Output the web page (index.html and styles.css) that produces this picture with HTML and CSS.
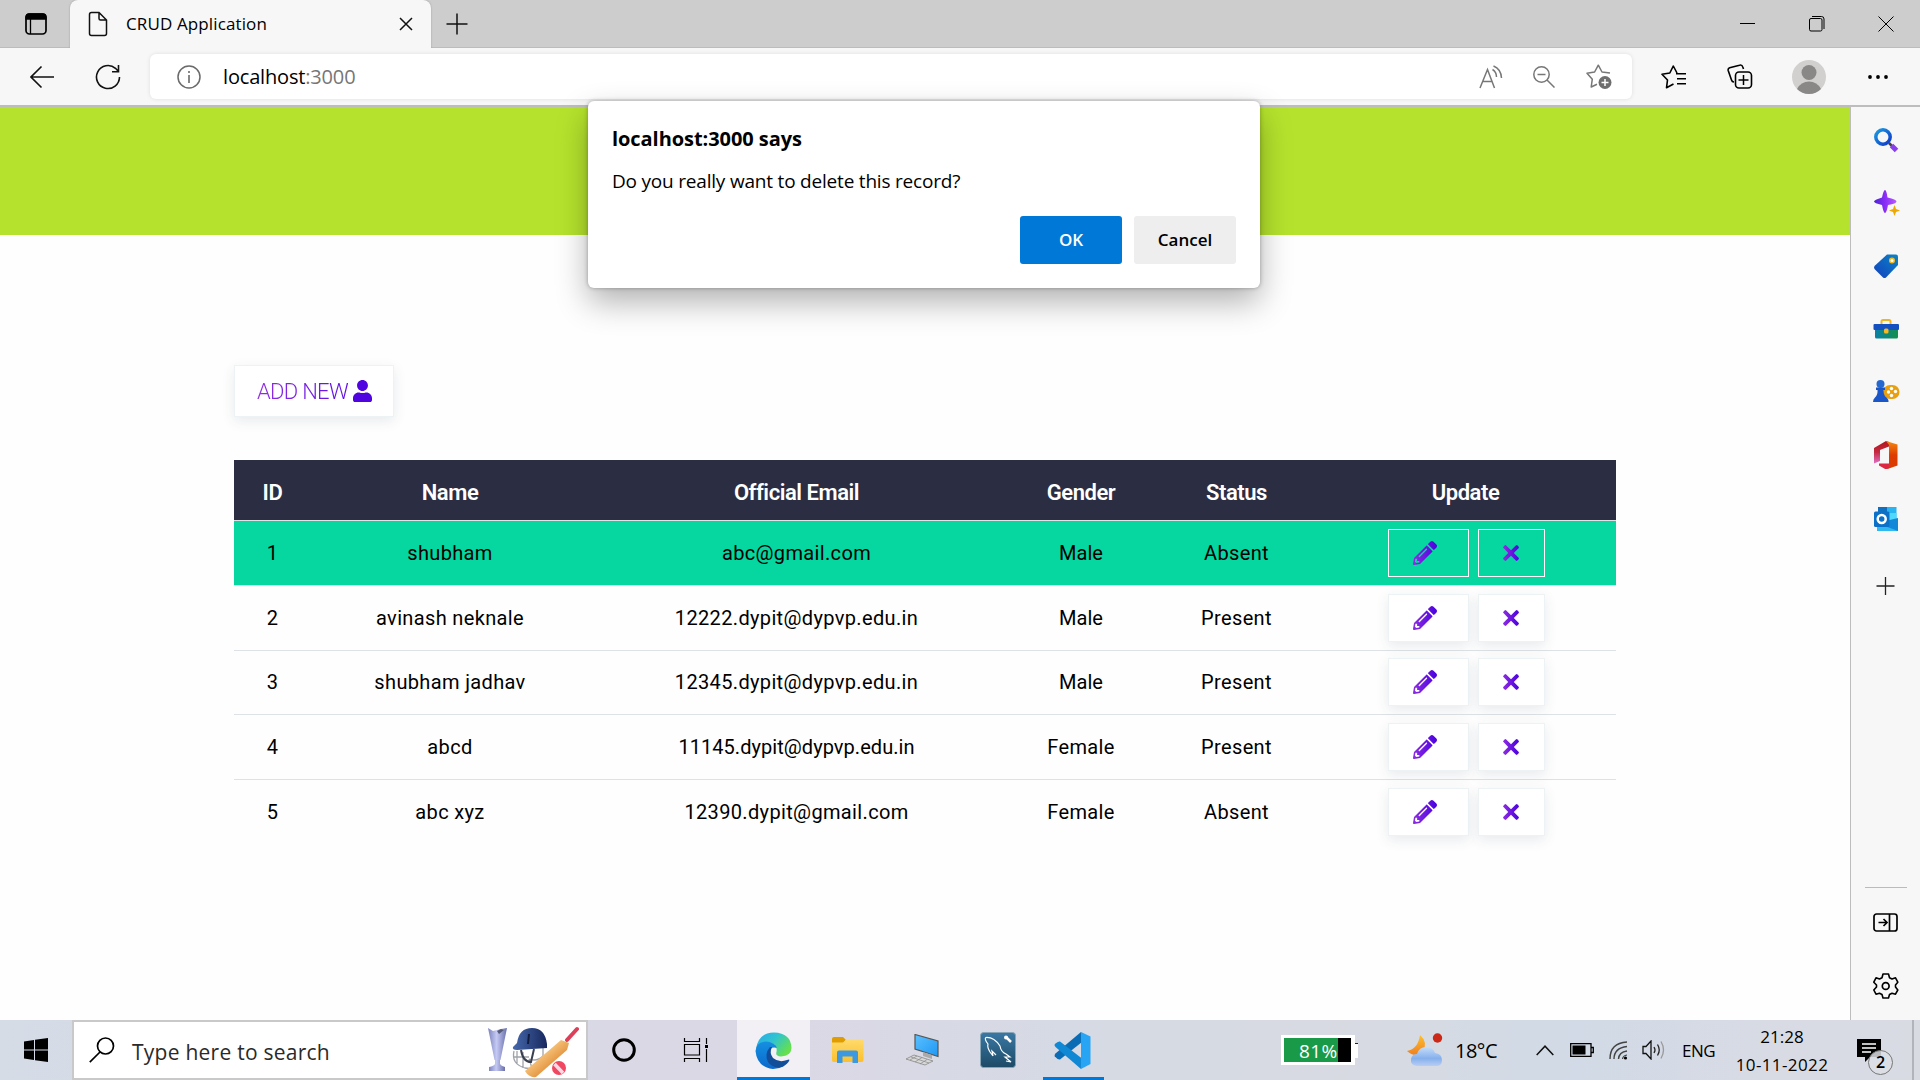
FILE: index.html
```html
<!DOCTYPE html>
<html lang="en">
<head>
<meta charset="utf-8">
<title>CRUD Application</title>
<link rel="stylesheet" href="styles.css">
</head>
<body>
<svg class="defs" width="0" height="0">
  <defs>
    <linearGradient id="violet" x1="0" y1="0" x2="1" y2="0"><stop offset="0" stop-color="#8e2de2"/><stop offset="1" stop-color="#4a00e0"/></linearGradient>
    <linearGradient id="blue" x1="0" y1="0" x2="1" y2="1"><stop offset="0" stop-color="#1a9be0"/><stop offset="1" stop-color="#1238c8"/></linearGradient>
    <linearGradient id="star" x1="0" y1="0" x2="1" y2="0"><stop offset="0" stop-color="#4b24d8"/><stop offset=".5" stop-color="#8a2cf5"/><stop offset="1" stop-color="#b95cff"/></linearGradient>
    <linearGradient id="tag" x1="0" y1="1" x2="1" y2="0"><stop offset="0" stop-color="#1340c0"/><stop offset="1" stop-color="#0b84c4"/></linearGradient>
    <linearGradient id="box" x1="0" y1="0" x2="1" y2="0"><stop offset="0" stop-color="#0a80a8"/><stop offset="1" stop-color="#12904a"/></linearGradient>
    <linearGradient id="office" x1="0" y1="0" x2="0" y2="1"><stop offset="0" stop-color="#f58a10"/><stop offset=".5" stop-color="#de3c00"/><stop offset="1" stop-color="#d83b01"/></linearGradient>
    <linearGradient id="officeLeft" x1="0" y1="0" x2="0" y2="1"><stop offset="0" stop-color="#b0151c"/><stop offset=".5" stop-color="#c42a40"/><stop offset="1" stop-color="#e070c8"/></linearGradient>
    <linearGradient id="edgeTop" x1="0" y1="0" x2="1" y2=".6"><stop offset="0" stop-color="#2aa6ea"/><stop offset=".5" stop-color="#2fc4d0"/><stop offset="1" stop-color="#66e04c"/></linearGradient>
    <linearGradient id="edgeMid" x1="0" y1="0" x2="0" y2="1"><stop offset="0" stop-color="#1590e0"/><stop offset="1" stop-color="#0a68cc"/></linearGradient>
    <linearGradient id="screen" x1="0" y1="0" x2="1" y2="1"><stop offset="0" stop-color="#5cc0ff"/><stop offset="1" stop-color="#1e98f4"/></linearGradient>
    <linearGradient id="sql" x1="0" y1="0" x2="0" y2="1"><stop offset="0" stop-color="#3a78a4"/><stop offset="1" stop-color="#1d4a66"/></linearGradient>
    <linearGradient id="folder" x1="0" y1="0" x2="0" y2="1"><stop offset="0" stop-color="#ffda6c"/><stop offset="1" stop-color="#fbc02c"/></linearGradient>
    <linearGradient id="cup" x1="0" y1="0" x2="1" y2="0"><stop offset="0" stop-color="#7c82bc"/><stop offset=".45" stop-color="#c4c9f4"/><stop offset="1" stop-color="#6a70aa"/></linearGradient>
    <linearGradient id="helmet" x1="0" y1="0" x2="1" y2="0"><stop offset="0" stop-color="#4668ac"/><stop offset="1" stop-color="#17285e"/></linearGradient>
    <linearGradient id="bat" x1="0" y1="0" x2="1" y2="1"><stop offset=".3" stop-color="#fcd08c"/><stop offset=".7" stop-color="#e08c34"/></linearGradient>
    <linearGradient id="moon" x1="0" y1="0" x2="0" y2="1"><stop offset="0" stop-color="#fcc030"/><stop offset="1" stop-color="#f08020"/></linearGradient>
    <linearGradient id="cloud" x1="0" y1="0" x2="0" y2="1"><stop offset="0" stop-color="#c4ddfa"/><stop offset=".6" stop-color="#86b0ec"/><stop offset="1" stop-color="#b8cdf4"/></linearGradient>
    <symbol id="pencil" viewBox="0 0 512 512"><path d="M497.9 142.1l-46.1 46.1c-4.7 4.7-12.3 4.7-17 0l-111-111c-4.7-4.7-4.7-12.3 0-17l46.1-46.1c18.7-18.7 49.1-18.7 67.9 0l60.1 60.1c18.8 18.7 18.8 49.1 0 67.9zM284.2 99.8L21.6 362.4.4 483.9c-2.9 16.4 11.4 30.6 27.8 27.8l121.5-21.3 262.6-262.6c4.7-4.7 4.7-12.3 0-17l-111-111c-4.8-4.7-12.4-4.7-17.1 0zM124.1 339.9c-5.5-5.5-5.5-14.3 0-19.8l154-154c5.5-5.5 14.3-5.5 19.8 0s5.5 14.3 0 19.8l-154 154c-5.5 5.5-14.3 5.5-19.8 0zM88 424h48v36.3l-64.5 11.3-31.1-31.1L51.7 376H88v48z" fill="url(#violet)"/></symbol>
    <symbol id="cross" viewBox="0 0 16 16"><path d="M0 2.5Q1 .3 2.7 0L8 5.2 13.3 0Q15.500.3 16 2.700L10.8 8 16 13.300Q15.600 15.500 13.300 16L8 10.800 2.700 16Q.4 15.600 0 13.300L5.200 8Z" fill="url(#violet)"/></symbol>
  </defs>
</svg>

<header class="tabs">
  <svg class="workspaces" width="22" height="22" viewBox="0 0 22 22"><rect x="1" y="1" width="20" height="20" rx="3.500" fill="none" stroke="#000" stroke-width="1.700"/><path d="M1 6V4q0-3 3-3h14q3 0 3 3v2zM5.500 6v15" stroke="#000" stroke-width="1.300"/></svg>
  <div class="tab">
    <svg width="20" height="26" viewBox="0 0 20 26"><path d="M3.500 1.500H11L18.500 9V22.500Q18.500 24.500 16.500 24.500H3.500Q1.500 24.500 1.500 22.500V3.500Q1.500 1.500 3.500 1.500ZM11 1.500V7.500Q11 9 12.500 9H18.500" fill="none" stroke="#111" stroke-width="1.500"/></svg>
    <span class="tab-title">CRUD Application</span>
    <svg class="tab-close" width="14" height="14" viewBox="0 0 14 14"><path d="M1 1L13 13M13 1L1 13" stroke="#111" stroke-width="1.500"/></svg>
  </div>
  <svg class="tab-new" width="22" height="22" viewBox="0 0 22 22"><path d="M11 .5V21.500M.5 11H21.500" stroke="#111" stroke-width="1.500"/></svg>
  <div class="window-buttons">
    <svg width="16" height="16" viewBox="0 0 16 16"><path d="M0 7.500H15" stroke="#000"/></svg>
    <svg width="16" height="16" viewBox="0 0 16 16"><rect x=".5" y="2.500" width="12.500" height="12.500" rx="1.500" fill="none" stroke="#000"/><path d="M3 .5H12.500Q15 .5 15 3V13" fill="none" stroke="#000"/></svg>
    <svg width="16" height="16" viewBox="0 0 16 16"><path d="M.5 .5L15.500 15.500M15.500 .5L.5 15.500" stroke="#000"/></svg>
  </div>
</header>

<nav class="toolbar">
  <svg class="back" width="24" height="24" viewBox="0 0 24 24"><path d="M24 12H1M11.500 1.500L1 12L11.500 22.500" fill="none" stroke="#111" stroke-width="1.600"/></svg>
  <svg class="reload" width="26" height="26" viewBox="0 0 26 26"><path d="M24.500 13A11.500 11.500 0 1 1 20.500 4.300L23.500 7.500M23.500 1V7.800H17" fill="none" stroke="#111" stroke-width="1.600"/></svg>
  <div class="address">
    <svg width="24" height="24" viewBox="0 0 24 24"><circle cx="12" cy="12" r="11" fill="none" stroke="#6a6a6a" stroke-width="1.500"/><path d="M12 10V18M12 6V8" stroke="#6a6a6a" stroke-width="1.600"/></svg>
    <span class="url">localhost<span class="port">:3000</span></span>
    <svg class="read" width="24" height="24" viewBox="0 0 24 24"><path d="M1 23L8.500 4.500L15.500 23M3.500 16.500H13M13.500 4.500Q17.500 7 17.500 12M14.500 1Q22 4 22.500 13" fill="none" stroke="#777" stroke-width="1.500"/></svg>
    <svg class="zoom-out" width="22" height="22" viewBox="0 0 22 22"><circle cx="8.500" cy="8.500" r="7.700" fill="none" stroke="#777" stroke-width="1.500"/><path d="M4.500 8.500H12.500M14 14L21.500 21.500" stroke="#777" stroke-width="1.500"/></svg>
    <svg class="fav" width="26" height="26" viewBox="0 0 26 26"><path d="M24 9L16 8L12.300 1.200L8.600 8L1 9.300L6.300 15.200L5.200 23L11 20.300" fill="none" stroke="#777" stroke-width="1.500" stroke-linejoin="round"/><circle cx="19" cy="18.500" r="6.500" fill="#6e6e6e"/><path d="M19 15V22M15.500 18.500H22.500" stroke="#fff" stroke-width="1.500"/></svg>
  </div>
  <svg class="favorites" width="26" height="24" viewBox="0 0 26 24"><path d="M16 8L12.300 1L8.800 8L1 9.300L6.500 15L5.500 22.800L12.500 19M15 8.700H25M16 13.700H25M16 18.700H25" fill="none" stroke="#000" stroke-width="1.600" stroke-linejoin="round"/></svg>
  <svg class="collections" width="26" height="26" viewBox="0 0 26 26"><path d="M7 18Q5 18 4.500 16L1.200 6.500Q.7 4.500 2.700 3.700L12.500 1.200Q15 .5 15.800 3L16.500 5" fill="none" stroke="#000" stroke-width="1.600"/><rect x="8.500" y="8" width="16" height="16" rx="3.500" fill="none" stroke="#000" stroke-width="1.600"/><path d="M16.500 11V21M11.500 16H21.500" stroke="#000" stroke-width="1.500"/></svg>
  <svg class="avatar" width="34" height="34" viewBox="0 0 34 34"><circle cx="17" cy="17" r="17" fill="#d2d0ce"/><circle cx="17" cy="12.500" r="7.500" fill="#8a8886"/><path d="M5 29Q9 21.500 17 21.500T29 29Q24 34 17 34T5 29Z" fill="#8a8886"/></svg>
  <svg class="more" width="20" height="4" viewBox="0 0 20 4"><circle cx="2" cy="2" r="1.900"/><circle cx="10" cy="2" r="1.900"/><circle cx="18" cy="2" r="1.900"/></svg>
</nav>

<div class="content">
  <main class="page">
    <div class="banner"></div>
    <div class="container">
      <button class="btn btn-new"><span class="btn-label">ADD NEW</span><svg width="19" height="22" viewBox="0 0 448 512" preserveAspectRatio="none"><path fill="#4f04e0" d="M224 256c70.700 0 128-57.300 128-128S294.700 0 224 0 96 57.300 96 128s57.300 128 128 128zm89.600 32h-16.700c-22.200 10.200-46.900 16-72.900 16s-50.600-5.800-72.900-16h-16.700C60.200 288 0 348.200 0 422.400V464c0 26.500 21.500 48 48 48h352c26.500 0 48-21.500 48-48v-41.600c0-74.200-60.200-134.400-134.400-134.400z"/></svg></button>
      <table class="records">
        <colgroup><col class="c-id"><col class="c-name"><col class="c-email"><col class="c-gender"><col class="c-status"><col class="c-update"></colgroup>
        <thead><tr><th>ID</th><th>Name</th><th>Official Email</th><th>Gender</th><th>Status</th><th>Update</th></tr></thead>
        <tbody>
          <tr class="active"><td>1</td><td>shubham</td><td>abc@gmail.com</td><td class="gender">Male</td><td>Absent</td><td><div class="actions"><button class="btn edit"><svg width="24" height="24"><use href="#pencil"/></svg></button><button class="btn del"><svg width="16" height="16"><use href="#cross"/></svg></button></div></td></tr>
          <tr><td>2</td><td>avinash neknale</td><td>12222.dypit@dypvp.edu.in</td><td class="gender">Male</td><td>Present</td><td><div class="actions"><button class="btn edit"><svg width="24" height="24"><use href="#pencil"/></svg></button><button class="btn del"><svg width="16" height="16"><use href="#cross"/></svg></button></div></td></tr>
          <tr><td>3</td><td>shubham jadhav</td><td>12345.dypit@dypvp.edu.in</td><td class="gender">Male</td><td>Present</td><td><div class="actions"><button class="btn edit"><svg width="24" height="24"><use href="#pencil"/></svg></button><button class="btn del"><svg width="16" height="16"><use href="#cross"/></svg></button></div></td></tr>
          <tr><td>4</td><td>abcd</td><td class="narrow">11145.dypit@dypvp.edu.in</td><td>Female</td><td>Present</td><td><div class="actions"><button class="btn edit"><svg width="24" height="24"><use href="#pencil"/></svg></button><button class="btn del"><svg width="16" height="16"><use href="#cross"/></svg></button></div></td></tr>
          <tr><td>5</td><td>abc xyz</td><td>12390.dypit@gmail.com</td><td>Female</td><td>Absent</td><td><div class="actions"><button class="btn edit"><svg width="24" height="24"><use href="#pencil"/></svg></button><button class="btn del"><svg width="16" height="16"><use href="#cross"/></svg></button></div></td></tr>
        </tbody>
      </table>
    </div>
  </main>
  <aside class="sidebar">
    <svg viewBox="0 0 28 28"><circle cx="11" cy="11" r="7.200" fill="none" stroke="url(#blue)" stroke-width="3.500"/><path d="M17 17L20 20" stroke="#444" stroke-width="2.500"/><path d="M19.500 19.500L24.500 24.500" stroke="#8a3cf0" stroke-width="5"/></svg>
    <svg viewBox="0 0 28 28"><path d="M13 1Q14.500 1 15.500 8.500Q24.500 10.500 24.500 12.500T16 16Q14.500 24 13 24T10 16Q2 14 2 12.500T10 8.500Q11.500 1 13 1Z" fill="url(#star)"/><path d="M22.500 16L24 20L28 21.500L24 23L22.500 27L21 23L17 21.500L21 20Z" fill="#f0a800"/></svg>
    <svg viewBox="0 0 28 28"><path d="M15 2.500H24Q26 2.500 26 4.500V13L14 25.500Q12.500 26.500 11 25.500L2.500 17Q1.500 15.500 2.500 14Z" fill="url(#tag)"/><circle cx="20" cy="8.500" r="2.300" fill="#fff" stroke="#f0b820" stroke-width="1.500"/></svg>
    <svg viewBox="0 0 28 28"><path d="M9.500 9V6.500Q9.500 5 11 5H17Q18.500 5 18.500 6.500V9" fill="none" stroke="#f0b428" stroke-width="2"/><rect x="3" y="12" width="23" height="11.500" rx="1.500" fill="url(#box)"/><rect x="1.500" y="9" width="25.500" height="6" rx="1" fill="#1550c0"/><rect x="12" y="13.500" width="4.500" height="5" rx="1.500" fill="#f8b820"/></svg>
    <svg viewBox="0 0 28 28"><rect x="11" y="7" width="16.500" height="14" rx="7" fill="#e8a010"/><g fill="#fff"><circle cx="19.500" cy="10.500" r="1.700"/><circle cx="23.500" cy="13.500" r="1.700"/><circle cx="19.500" cy="17.500" r="1.700"/><circle cx="16.500" cy="14" r="1.700"/></g><circle cx="8.500" cy="6" r="4" fill="#2468d0"/><path d="M4 9.500H13V12H11.500Q11.500 18 15 20Q17 22 16.500 24H1Q1 21 3 19.500Q6 17 5.500 12H4Z" fill="#1a56c8"/></svg>
    <svg viewBox="0 0 28 28"><path d="M2 7L14 0L17 1V5.500L8 9V20L2 22.500Z" fill="url(#officeLeft)"/><path d="M14 0L25.500 3.500V24.500L14 28.500L17 26V4Z" fill="url(#office)"/><path d="M7 22.500H17V27L14 28.500L7 24.500Z" fill="#dc2840"/></svg>
    <svg viewBox="0 0 28 28"><rect x="6" y="2" width="18.500" height="14" fill="#28b4f0"/><path d="M6 2H15V8H6Z" fill="#1070c0"/><path d="M15 8H24.500V16H15Z" fill="#50d9ff"/><path d="M5 18L26 13V26H5Z" fill="#1488d8"/><path d="M5 18L26 26H5Z" fill="#30b8f0"/><rect x="2" y="6.500" width="15.500" height="15.500" rx="1.500" fill="#0a70c8"/><circle cx="9.700" cy="14" r="4" fill="none" stroke="#fff" stroke-width="2.500"/></svg>
    <svg class="add" viewBox="0 0 28 28"><path d="M13.500 5V23M4.500 14H22.500" stroke="#222" stroke-width="1.300"/></svg>
    <div class="rule"></div>
    <svg viewBox="0 0 28 28"><rect x="2" y="5" width="23" height="17" rx="2.500" fill="none" stroke="#000" stroke-width="1.700"/><path d="M17.500 5V22M6.500 13.500H15M11.500 10L15 13.500L11.500 17" fill="none" stroke="#000" stroke-width="1.700"/></svg>
    <svg viewBox="0 0 28 28"><path d="M11 2H16.500L17.500 5.800L20 7L23.500 5.800L25.800 10.200L23.500 13V15L25.800 18L23.500 22.200L20 21.200L17.500 22.500L16.500 26H11L10 22.500L7.500 21.200L4 22.200L1.800 18L4.500 15V13L1.800 10.200L4 5.800L7.500 7L10 5.800Z" fill="none" stroke="#000" stroke-width="1.600" stroke-linejoin="round"/><circle cx="13.700" cy="14" r="3.400" fill="none" stroke="#000" stroke-width="1.700"/></svg>
  </aside>
</div>

<footer class="taskbar">
  <div class="cell start"><svg width="24" height="24" viewBox="0 0 24 24"><path d="M0 3.500L10 2V11.400H0ZM11 1.800L24 0V11.400H11ZM0 12.500H10V22L0 20.600ZM11 12.500H24V24L11 22.200Z"/></svg></div>
  <div class="search">
    <svg width="26" height="26" viewBox="0 0 26 26"><circle cx="16.500" cy="9" r="8" fill="none" stroke="#000" stroke-width="1.700"/><path d="M11 15L.8 25.200" stroke="#000" stroke-width="1.700"/></svg>
    <span class="search-text">Type here to search</span>
    <svg class="cricket" width="92" height="52" viewBox="0 0 92 52"><path d="M1 2L6 5L14 3L20 2L13.500 34H7.500Z" fill="url(#cup)"/><path d="M8 34H13V38Q14 40 18 41V45H2V41Q7 40 8 38Z" fill="url(#cup)"/><path d="M10 5L14 3L17 4L12 8Z" fill="#555a78"/><path d="M27 25Q24 38 38 42Q50 44 55 35M27 31H42M30 25V38M36 26V42M42 33Q50 36 56 30V22M42 33L45 42" fill="none" stroke="#a0a4a8" stroke-width="1.300"/><path d="M34 24Q36 36 44 36L47 23" fill="none" stroke="#3a3f50" stroke-width="2"/><path d="M30 17Q32 2 45 2T60 18V22L30 24Q25 24 26 21Z" fill="url(#helmet)"/><path d="M42 8L41 18" stroke="#101c40" stroke-width="2"/><path d="M80 14L90 3" stroke="#dc4058" stroke-width="4" stroke-linecap="round"/><path d="M74 14L82 17L80 24L49 51Q42 52 38 45Z" fill="url(#bat)"/><circle cx="72" cy="42" r="7" fill="#f04860"/><path d="M67.500 38L76 47" stroke="#ffd8e4" stroke-width="3.500"/></svg>
  </div>
  <div class="cell"><svg width="24" height="24" viewBox="0 0 24 24"><circle cx="12" cy="12" r="10.300" fill="none" stroke="#000" stroke-width="3"/></svg></div>
  <div class="cell"><svg width="26" height="24" viewBox="0 0 26 24"><path d="M1.500 0V3.500H16.500V0M1.500 24V20.500H16.500V24M1.500 6.500H16.500V17H1.500ZM23.500 0V6M23.500 11V24" fill="none" stroke="#000" stroke-width="1.200"/><rect x="22" y="7" width="3" height="3"/></svg></div>
  <div class="cell edge"><svg width="37" height="37" viewBox="0 0 37 37"><path d="M1 17Q3 1 19 .5Q36 1 36.500 16Q36 24 26 24.500Q20 24 21.500 20Q23 12 14 10Q5 9.500 1 17Z" fill="url(#edgeTop)"/><path d="M.5 19Q1 10 11 9.500Q20 10 22 16Q15 14 13.500 21Q13 31 25 34Q28 34 29 34Q24 37 18 37Q2 35 .5 19Z" fill="url(#edgeMid)"/><path d="M15 15Q9 22 13 30Q18 37 27 35Q33 32 34.500 28Q34 27 32 28Q24 31 18 26Q14 21 17 15Z" fill="#114d98"/></svg></div>
  <div class="cell app"><svg width="33" height="28" viewBox="0 0 33 28"><path d="M1 3Q1 1 3 1H12L15 4L12 8H1Z" fill="#e09c00"/><path d="M1 6.500H12L15 3.500H31Q32.500 3.500 32.500 5V24Q32.500 26 31 26H2.500Q1 26 1 24Z" fill="url(#folder)"/><path d="M6 27V16.500Q6 14.500 8 14.500H25Q27 14.500 27 16.500V27H21.500V20.500H11.500V27Z" fill="#3c98e0"/></svg></div>
  <div class="cell app"><svg width="33" height="32" viewBox="0 0 33 32"><path d="M9 .5L32 7V22.500L9 15Z" fill="url(#screen)" stroke="#555" stroke-width="1.200"/><path d="M17 18V22L26 25V21Z" fill="#aaa"/><path d="M8 21L27 27L19 31L0 25Z" fill="#d8d8d8" stroke="#888" stroke-width=".8"/><path d="M5 23L23 29M11 22L4 26M16 23.500L9 28M21 25.500L14 30" stroke="#888" stroke-width=".7"/></svg></div>
  <div class="cell app"><svg width="36" height="36" viewBox="0 0 36 36"><rect x=".5" y=".5" width="35" height="35" rx="3" fill="url(#sql)" stroke="#89a5b8" stroke-width="1"/><path d="M13 24L10 20Q7 15 8 12Q4 7 6 5.500Q14 5 20 14Q21 20 26 22L30 25L25 25L31 30L26 29M13 24L12 19L16 23" fill="none" stroke="#fff" stroke-width="1.200"/><path d="M26 5L31 10" stroke="#fff" stroke-width="2.500"/><circle cx="26" cy="5.500" r="2" fill="#fff"/></svg></div>
  <div class="cell app code"><svg width="37" height="37" viewBox="0 0 37 37"><path d="M27 0L28 10L6 27.500Q4 28 .8 24.500Q0 23 1.500 21.500Z" fill="#0a6cb4"/><path d="M27 37L28 26.500L6 9.500Q4 9 .8 12Q0 13.500 1.500 15Z" fill="#1088d4"/><path d="M27 0L36.500 4.500V32L27 37Z" fill="#28a4f4"/></svg></div>

  <div class="battery-widget"><span class="charge">81%</span></div>
  <svg class="weather" width="37" height="34" viewBox="0 0 37 34"><path d="M14 2Q22 9 17 18Q10 26 1 18Q12 16 14 2Z" fill="url(#moon)"/><path d="M11 33Q4 32 5 26Q6 21 11 21Q13 14 20 14Q27 14 29 20Q36 21 36 27Q36 33 30 33Z" fill="url(#cloud)"/><circle cx="31.500" cy="5" r="4.700" fill="#cc2818"/></svg>
  <span class="temp">18°C</span>
  <svg class="chevron" width="18" height="11" viewBox="0 0 18 11"><path d="M.7 10L9 1.200L17.300 10" fill="none" stroke="#111" stroke-width="1.500"/></svg>
  <svg class="battery" width="24" height="14" viewBox="0 0 24 14"><path d="M.7 .7H21V13.300H.7ZM21 4.500H23.300V9.500H21" fill="none" stroke="#000" stroke-width="1.300"/><rect x="2.500" y="2.500" width="13" height="9"/></svg>
  <svg class="wifi" width="19" height="19" viewBox="0 0 19 19"><path d="M1 18Q1 2 18 1M5 18Q5 7 18 5.500M9.500 18Q10 11 18 10" fill="none" stroke="#444" stroke-width="1.400"/><path d="M13.500 18Q14 14.500 18 14" fill="none" stroke="#444" stroke-width="1.200"/><circle cx="16.500" cy="17" r="1.600"/></svg>
  <svg class="volume" width="23" height="20" viewBox="0 0 23 20"><path d="M1 6.500H4L9 1V19L4 13.500H1Z" fill="none" stroke="#111" stroke-width="1.300"/><path d="M12 7Q14 10 12 13M15.500 4.500Q19 10 15.500 15.500" fill="none" stroke="#222" stroke-width="1.300"/><path d="M19 1.500Q24 10 19 18.500" fill="none" stroke="#999" stroke-width="1.300"/></svg>
  <span class="lang">ENG</span>
  <div class="clock"><span>21:28</span><span class="date">10-11-2022</span></div>
  <div class="notes"><svg width="24" height="23" viewBox="0 0 24 23"><path d="M0 0H24V18H13L8 23V18H0Z"/><path d="M5 5H19M5 9H19M5 13H14" stroke="#fff" stroke-width="1.300"/></svg><span class="badge">2</span></div>
  <div class="peek"></div>
</footer>

<div class="dialog">
  <div class="dialog-title">localhost:3000 says</div>
  <div class="dialog-text">Do you really want to delete this record?</div>
  <div class="dialog-buttons"><button class="ok">OK</button><button class="cancel">Cancel</button></div>
</div>
</body>
</html>
```
FILE: styles.css
```css
* { box-sizing: border-box; }
body { margin: 0; width: 1920px; height: 1080px; overflow: hidden; display: flex; flex-direction: column; position: relative; background: #fefefe; color: #000; font-family: "Open Sans", "Noto Sans", sans-serif; }
svg { display: block; flex: none; }
.defs { position: absolute; }
button { font: inherit; border: 0; margin: 0; padding: 0; }
span { white-space: nowrap; }

.tabs { height: 48px; flex: none; display: flex; align-items: center; background: #cdcdcd; box-shadow: inset 0 -1px #bcbcbc; }
.workspaces { margin-left: 25px; }
.tab { width: 361px; height: 48px; margin-left: 23px; padding: 0 18px 1px 18px; display: flex; align-items: center; background: #f7f7f7; border-radius: 8px 8px 0 0; box-shadow: 0 0 2px #999; clip-path: inset(0 -4px 0 -4px); }
.tab-title { margin-left: 18px; font-size: 17px; letter-spacing: .12px; }
.tab-close { margin-left: auto; margin-top: 1px; }
.tab-new { margin-left: 15px; margin-bottom: 1px; }
.window-buttons { margin-left: auto; margin-right: 26px; margin-bottom: 1px; display: flex; gap: 53px; }

.toolbar { height: 59px; flex: none; display: flex; align-items: center; background: #f7f7f7; border-bottom: 2px solid #bdbdbd; }
.back { margin-left: 30px; }
.reload { margin-left: 41px; }
.address { width: 1482px; height: 45px; margin-left: 29px; padding: 0 20px 0 27px; display: flex; align-items: center; border-radius: 6px; background: #fff; box-shadow: 0 0 4px rgba(0,0,0,.1); }
.url { margin-left: 22px; font-size: 20px; letter-spacing: -.17px; }
.port { color: #767676; }
.read { margin-left: auto; }
.zoom-out { margin-left: 30px; }
.fav { margin-left: 31px; }
.favorites { margin-left: 29px; }
.collections { margin-left: 40px; }
.avatar { margin-left: 39px; }
.more { margin-left: 42px; }

.content { height: 913px; flex: none; display: flex; }
.page { width: 1850px; }
.banner { height: 128px; background: #b5e32d; }
.container { margin: 130px 234px 0; width: 1382px; font-family: Roboto, sans-serif; }
.btn { display: flex; align-items: center; height: 48px; background: transparent; border: 1px solid #edf2f5; box-shadow: 0 4px 12px rgba(40,60,90,.1); }
.btn-new { width: 160px; height: 52px; padding-left: 22px; background: #fff; }
.btn-label { font-size: 22px; font-weight: 300; letter-spacing: -.69px; background: linear-gradient(90deg, #9030e0, #6010e0); background-clip: text; -webkit-background-clip: text; color: transparent; }
.btn-new svg { margin-left: 5px; }
.records { margin-top: 43px; width: 1382px; table-layout: fixed; border-spacing: 0; text-align: center; }
.c-id { width: 77px; }
.c-name { width: 278px; }
.c-email { width: 415px; }
.c-gender { width: 154px; }
.c-status { width: 157px; }
.c-update { width: 301px; }
th, td { padding: 0; border-bottom: 1px solid #dee2e6; }
th { height: 61px; padding-top: 5px; background: #2b2d42; color: #fff; font-size: 22px; font-weight: 600; letter-spacing: -.45px; }
td { height: 65px; font-size: 20px; font-weight: 400; letter-spacing: .35px; }
td.narrow { letter-spacing: .05px; }
td.gender:not(.female) { letter-spacing: 0; }
tbody tr:nth-child(2) td, tbody tr:nth-child(3) td, tbody tr:last-child td { padding-bottom: 1px; }
tbody tr:nth-child(3) td { height: 64px; }
tbody tr:last-child td { height: 64px; border-bottom: 0; }
.active td { background: #06d6a0; }
.actions { display: flex; justify-content: center; gap: 9px; padding-left: 2px; }
.edit { width: 81px; padding-left: 24px; background: #fff; }
.del { width: 67px; padding-left: 24px; background: #fff; }
.active .btn { background: transparent; border-color: #fff; box-shadow: none; }

.sidebar { width: 70px; display: flex; flex-direction: column; align-items: center; gap: 35.100px; padding-top: 19px; border-left: 1px solid #bdbdbd; background: #f7f7f7; }
.sidebar svg { width: 28px; height: 28px; }
.sidebar .add { margin-top: 4px; }
.rule { width: 42px; height: 1px; margin-top: auto; margin-bottom: -14px; background: #bbb; }
.sidebar svg:last-child { margin-bottom: 20px; }

.taskbar { height: 60px; flex: none; display: flex; align-items: center; background: linear-gradient(90deg, #d5dce6 0, #dad8e5 32%, #dbd8e4 40%, #d5dae4 56%, #d8dae2 70%, #d1dae6 82%, #d8dbe4 92%, #d9dbe3 100%); }
.cell { width: 72px; height: 60px; display: flex; align-items: center; justify-content: center; flex: none; }
.search { width: 516px; height: 60px; display: flex; align-items: center; border: 2px solid #c9c9c9; background: #fff; padding: 0 7px 0 15px; }
.search-text { margin-left: 17px; padding-top: 3px; font-size: 21px; letter-spacing: .25px; color: #2a2a2a; }
.cricket { margin-left: auto; margin-top: 3px; }
.edge { width: 73px; margin-left: 5px; background: #f2f0f5; border-bottom: 3px solid #0078d7; padding-top: 3px; }
.app { width: 75px; }
.code { position: relative; }
.code::after { content: ""; position: absolute; left: 8px; bottom: 0; width: 61px; height: 3px; background: #0078d7; }
.battery-widget { width: 74px; height: 30px; margin-left: 171px; padding: 3px 4px 3px 3px; display: flex; background: #fff; position: relative; }
.battery-widget::after { content: ""; position: absolute; left: 74px; top: 8px; width: 3px; height: 14px; background: #fff; border-top: 1px solid #222; }
.charge { flex: 1; display: flex; align-items: center; padding-left: 15px; padding-top: 2px; background: linear-gradient(90deg, #189a48 54px, #000 54px); color: #fff; font-size: 19px; letter-spacing: .4px; }
.weather { margin-left: 51px; }
.temp { margin-left: 12px; width: 42px; padding-top: 1px; font-size: 20px; letter-spacing: -.5px; }
.chevron { margin-left: 39px; }
.battery { margin-left: 16px; }
.wifi { margin-left: 15px; }
.volume { margin-left: 14px; }
.lang { margin-left: 17px; width: 33px; font-size: 17px; letter-spacing: -.54px; }
.clock { width: 94px; margin-left: 20px; display: flex; flex-direction: column; align-items: center; font-size: 17px; line-height: 28px; padding-top: 1px; }
.date { letter-spacing: .4px; }
.notes { margin-left: 28px; position: relative; }
.badge { position: absolute; left: 11px; top: 11px; width: 25px; height: 25px; border: 1px solid #777; border-radius: 50%; background: rgba(220,222,228,.85); font-size: 16px; font-weight: 600; line-height: 23px; text-align: center; }
.peek { margin-left: auto; width: 8px; height: 60px; border-left: 2px solid #b0b4bb; }

.dialog { position: absolute; left: 588px; top: 101px; width: 672px; height: 187px; padding: 24px; border-radius: 6px; background: #fff; box-shadow: 0 14px 32px rgba(0,0,0,.3), 0 0 4px rgba(0,0,0,.3); }
.dialog-title { font-size: 20px; font-weight: 700; line-height: 28px; letter-spacing: -.06px; }
.dialog-text { margin-top: 14px; font-size: 19px; line-height: 28px; letter-spacing: -.2px; }
.dialog-buttons { margin-top: 21px; display: flex; justify-content: flex-end; gap: 12px; }
.dialog-buttons button { width: 102px; height: 48px; padding-bottom: 1px; border-radius: 3px; font-size: 17px; font-weight: 600; }
.ok { background: #0078d7; color: #fff; }
.cancel { background: #eee; color: #000; }
```
